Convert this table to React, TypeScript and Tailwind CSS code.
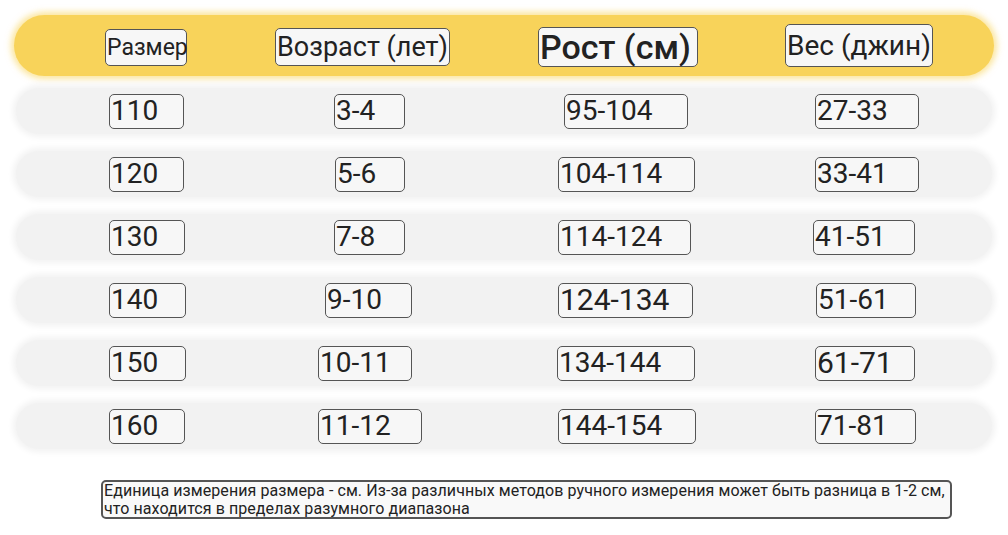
const font = { fontFamily: "Roboto, 'Noto Sans', sans-serif" };

type Cell = { text: string; box: string };

// header cells, each offset from the end of the previous one
const HEAD: Cell[] = [
  { text: "Размер", box: "ml-[91px] w-[82px] h-[37px] mt-[14px] text-[23px]" },
  { text: "Возраст (лет)", box: "ml-[88px] w-[175px] h-[38px] mt-[13px] text-[27px]" },
  { text: "Рост (см)", box: "ml-[88px] w-[160px] h-[40px] mt-[12px] text-[34px] font-medium" },
  { text: "Вес (джин)", box: "ml-[87px] w-[148px] h-[43px] mt-[9px] text-[28px]" },
];

// rows: [size, age, height, weight] with per-cell offset inside its column
const ROWS: Cell[][] = [
  [
    { text: "110", box: "ml-0 w-[75px]" },
    { text: "3-4", box: "ml-[16px] w-[71px]" },
    { text: "95-104", box: "ml-[7px] w-[124px]" },
    { text: "27-33", box: "ml-[2px] w-[104px]" },
  ],
  [
    { text: "120", box: "ml-0 w-[75px]" },
    { text: "5-6", box: "ml-[17px] w-[70px]" },
    { text: "104-114", box: "ml-[1px] w-[137px]" },
    { text: "33-41", box: "ml-[2px] w-[104px]" },
  ],
  [
    { text: "130", box: "ml-0 w-[76px]" },
    { text: "7-8", box: "ml-[16px] w-[71px]" },
    { text: "114-124", box: "ml-[1px] w-[133px]" },
    { text: "41-51", box: "ml-0 w-[102px]" },
  ],
  [
    { text: "140", box: "ml-0 w-[77px]" },
    { text: "9-10", box: "ml-[7px] w-[87px]" },
    { text: "124-134", box: "ml-[1px] w-[135px] text-[30px]" },
    { text: "51-61", box: "ml-[3px] w-[100px]" },
  ],
  [
    { text: "150", box: "ml-0 w-[77px]" },
    { text: "10-11", box: "ml-0 w-[94px]" },
    { text: "134-144", box: "ml-0 w-[138px]" },
    { text: "61-71", box: "ml-[2px] w-[100px] text-[30px]" },
  ],
  [
    { text: "160", box: "ml-0 w-[76px]" },
    { text: "11-12", box: "ml-0 w-[104px]" },
    { text: "144-154", box: "ml-[1px] w-[138px]" },
    { text: "71-81", box: "ml-[2px] w-[101px]" },
  ],
];

function Box({ text, box }: Cell) {
  return (
    <div
      className={`${box} flex items-center rounded-[5px] border-[1.5px] border-[#555] bg-[#f7f7f7] pl-[1px] leading-none text-[#222] whitespace-nowrap`}
    >
      {text}
    </div>
  );
}

export default function App() {
  return (
    <div className="w-[1008px] h-[535px] overflow-hidden bg-white pt-[15px]" style={font}>
      {/* yellow header band */}
      <div className="mx-[14px] flex h-[61px] rounded-full bg-[#f8d35a] shadow-[0_0_6px_3px_#f8d35a99]">
        {HEAD.map((c) => (
          <div key={c.text} className="shrink-0">
            <Box text={c.text} box={c.box} />
          </div>
        ))}
      </div>

      {/* data rows */}
      <div className="mt-[12px] flex flex-col gap-[17px]">
        {ROWS.map((row, i) => (
          <div
            key={i}
            className="mx-[16px] grid h-[46px] grid-cols-[209px_239px_256px_1fr] items-center rounded-full bg-[#f2f2f2] pl-[93px] shadow-[0_0_6px_3px_#f2f2f2]"
          >
            {row.map((c) => (
              <div key={c.text} className="flex">
                <Box text={c.text} box={`h-[35px] text-[28px] ${c.box}`} />
              </div>
            ))}
          </div>
        ))}
      </div>

      {/* footnote */}
      <div className="mt-[31px] ml-[101px] w-[851px] h-[39px] rounded-[5px] border-2 border-[#555] bg-[#f9f9f9] px-[1px] text-[16px] leading-[18px] tracking-[0.08px] text-[#222]">
        Единица измерения размера - см. Из-за различных методов ручного измерения может быть разница в 1-2 см,
        <br />
        что находится в пределах разумного диапазона
      </div>
    </div>
  );
}
